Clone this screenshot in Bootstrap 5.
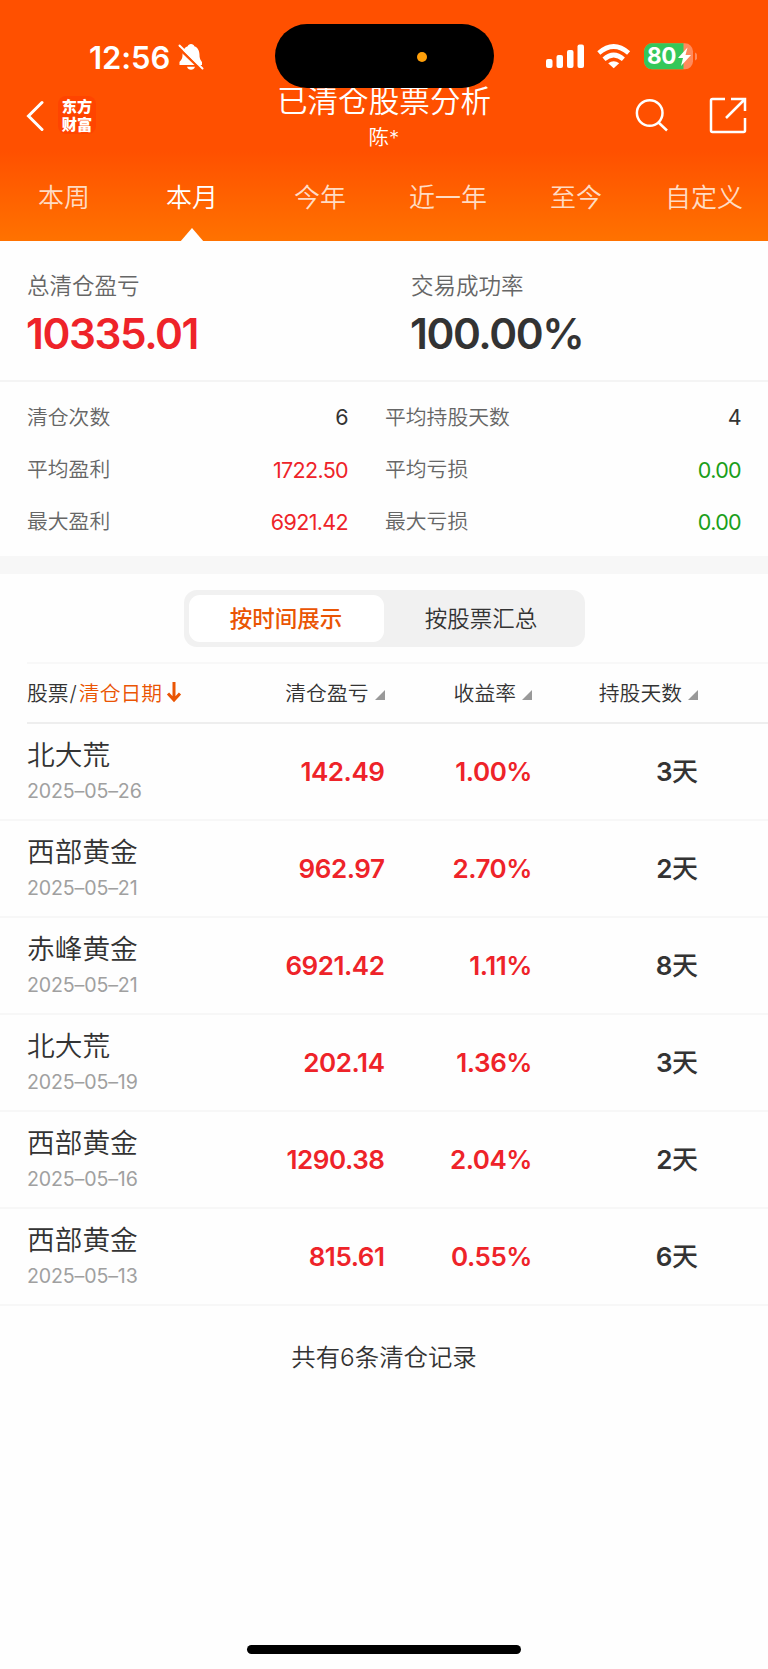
<!DOCTYPE html>
<html lang="zh-CN">
<head>
<meta charset="utf-8">
<meta name="viewport" content="width=device-width, initial-scale=1">
<title>已清仓股票分析</title>
<link href="https://cdn.jsdelivr.net/npm/bootstrap@5.3.0/dist/css/bootstrap.min.css" rel="stylesheet">
<style>
  body { font-family: Inter, "Noto Sans CJK SC", sans-serif; color: #333; background: #fefefe; line-height: 1; font-weight: 350; overflow-x: hidden; }
  .hero { height: 241px; background: linear-gradient(#ff5000 0, #ff5000 150px, #ff7200 241px); }
  .status-row { height: 88px; }
  .clock { font-size: 31px; font-weight: 600; line-height: 36px; margin: 40px 0 0 89px; width: 87px; letter-spacing: -.1px; }
  .island { left: 274.500px; top: 24px; width: 219px; height: 64px; border-radius: 32px; background: #000; z-index: 2; }
  .island i { position: absolute; left: 142px; top: 28px; width: 10px; height: 10px; border-radius: 50%; background: #ff9f0a; }
  .title-row { height: 66px; }
  .app-logo { width: 38px; height: 38px; border-radius: 8px; background: #ff4400; font: 900 15.2px/17.5px "Noto Sans CJK SC", sans-serif; margin: 8px 0 0 14px; padding-top: 1px; }
  .page-title { font-size: 30.6px; line-height: 34px; margin-top: -4px; }
  .page-user { font-size: 20.5px; line-height: 28px; margin-top: 6px; }
  .center-title { left: 0; right: 0; top: 88px; }
  .period { height: 87px; }
  .period a { font-size: 26px; line-height: 88px; color: #ffdcc4; text-decoration: none; }
  .period a.active { color: #fff; }
  .period a.active::after { content: ""; position: absolute; left: 52px; bottom: 0; border: 12px solid transparent; border-top: 0; border-bottom: 14px solid #fefefe; }
  .summary { height: 141px; border-bottom: 2px solid #f4f4f4; padding: 29px 27px 0; }
  .summary .col-6 { padding: 0; }
  .summary .col-6 + .col-6 { padding-left: 27px; }
  .label-lg { font-size: 22.5px; line-height: 32px; color: #666; }
  .figure-lg { font-size: 42.3px; line-height: 52px; font-weight: 560; margin: 6px 0 0 -1px; letter-spacing: -1.4px; }
  .up { color: #ee2329; }
  .down { color: #1a9e1a; }
  .stats { height: 174px; padding: 10px 27px 0; column-gap: 37px; display: grid; grid-template-columns: 321px 356px; grid-auto-rows: 52.3px; font-size: 21.5px; font-weight: 400; letter-spacing: -.65px; }
  .stats span { color: #666; font-size: 20.8px; font-weight: 350; letter-spacing: 0; }
  .band { height: 18px; background: #f7f7f7; }
  .switcher { margin: 16px auto 0; width: 401px; height: 57px; padding: 5px; border-radius: 13px; background: #f1f1f1; }
  .switcher .btn { font-size: 22.5px; line-height: 47px; padding: 0; border: 0; border-radius: 11px; width: 195px; color: #333; font-weight: 350; }
  .switcher .btn.active { background: #fff; color: #ea5504; font-weight: 500; }
  .grid-line { display: grid; grid-template-columns: 200px 157.500px 147.500px 166px; align-items: center; padding-left: 27px; }
  .heads { height: 62px; margin: 15px 0 0 27px; padding: 2px 0 0; border-top: 2px solid #f8f8f8; border-bottom: 2px solid #eee; font-size: 20.8px; }
  .heads .sort-mark { margin-left: 6px; }
  .slash { margin-left: 1px; }
  .sorted { color: #ea5504; margin-left: 2px; }
  .deal { height: 97px; border-bottom: 2px solid #f7f7f7; font-size: 26px; font-weight: 560; letter-spacing: -.45px; }
  .deal .text-end { padding-top: 1px; }
  .deal h2 { font-size: 27.7px; line-height: 36px; margin: -3px 0 0; font-weight: 350; letter-spacing: 0; }
  .deal time { font-size: 19.6px; line-height: 24px; display: block; margin-top: 6px; color: #a0a0a0; font-weight: 400; letter-spacing: -.15px; }
  .deal .unit { font-weight: 500; letter-spacing: 0; }
  .total { font-size: 24.4px; line-height: 36px; margin-top: 33px; }
  .home-bar { width: 274px; height: 9px; border-radius: 5px; background: #000; margin: 270px 0 0 247px; }
</style>
</head>
<body>
<header class="hero position-relative text-white">
  <div class="status-row d-flex">
    <div class="clock">12:56</div>
    <svg width="26" height="28" viewBox="0 0 26 28" style="margin:43px 0 0 2px"><path d="M13 1c1.800 0 3 1 3.300 2.200C20 4.500 21.500 8 21.500 12c0 4 1.500 5.500 2.500 7v3H1.500v-3c1.500-2 3-3 3-7 0-5 2.300-7.800 5.200-8.800C10.300 2 11.300 1 13 1ZM9 23.800h8c-.5 2-2.200 3-4 3s-3.500-1-4-3Z" fill="#fff"/><path d="m0 4.500 24 23" stroke="#ff5000" stroke-width="2.500"/><path d="m1.500 2.500 23 23" stroke="#fff" stroke-width="2" stroke-linecap="round"/></svg>
    <div class="island position-absolute"><i></i></div>
    <svg class="ms-auto" width="154" height="30" viewBox="0 0 154 30" style="margin:42px 71px 0 0">
      <g fill="#fff"><rect x="3" y="17" width="6.500" height="9" rx="2"/><rect x="13.500" y="13" width="6.500" height="13" rx="2"/><rect x="24" y="8" width="6.500" height="18" rx="2"/><rect x="34.500" y="2.500" width="6.500" height="23.500" rx="2"/></g>
      <g fill="none" stroke="#fff" stroke-width="4.600"><path d="M55.800 11q14.900-13 29.800 0"/><path d="M61 17.200q9.700-8.400 19.400 0"/></g>
      <path d="m65.200 21.300 5.500 5 5.500-5q-5.500-4.300-11 0Z" fill="#fff"/>
      <rect x="101" y="1.300" width="49" height="26" rx="8" fill="#ff8a5c"/><path d="M140.500 1.300v26H109a8 8 0 0 1-8-8v-10a8 8 0 0 1 8-8Z" fill="#34c759"/><path d="M152 10.500q2.500 1 2.500 4t-2.500 4Z" fill="#ff8a5c"/>
      <text x="104" y="22.300" font-family="Inter" font-weight="700" font-size="22.500" letter-spacing="-.3" fill="#fff">80</text>
      <path d="m144.500 5.500-9.500 10.500h5l-2 8 10-11h-5.500Z" fill="#fff"/>
    </svg>
  </div>
  <div class="title-row d-flex">
    <svg width="18" height="32" viewBox="0 0 18 32" style="margin:12px 0 0 26px"><path d="M16 2.500 2.500 16 16 29.500" fill="none" stroke="#fff" stroke-width="3" stroke-linecap="round"/></svg>
    <div class="app-logo text-center"><div>东方</div><div>财富</div></div>
    <div class="center-title position-absolute text-center"><div class="page-title">已清仓股票分析</div><div class="page-user">陈*</div></div>
    <svg class="ms-auto" width="34" height="34" viewBox="0 0 34 34" style="margin:10px 40px 0 0"><g fill="none" stroke="#fff" stroke-width="2.500"><circle cx="14.700" cy="15" r="12.800"/><path d="m23.500 24.500 8.500 8"/></g></svg>
    <svg width="38" height="38" viewBox="0 0 38 38" style="margin:9px 21px 0 0"><g fill="none" stroke="#fff" stroke-width="2.500"><path d="M16 2H3.500Q2 2 2 3.500v30Q2 35 3.500 35h31q1.500 0 1.500-1.500V21"/><path d="M22 2h14v12M36 2 17 21"/></g></svg>
  </div>
  <nav class="period row g-0 text-center">
    <a class="col" href="#">本周</a><a class="col active position-relative" href="#">本月</a><a class="col" href="#">今年</a><a class="col" href="#">近一年</a><a class="col" href="#">至今</a><a class="col" href="#">自定义</a>
  </nav>
</header>
<section class="summary">
  <div class="row g-0">
    <div class="col-6"><div class="label-lg">总清仓盈亏</div><div class="figure-lg up">10335.01</div></div>
    <div class="col-6"><div class="label-lg">交易成功率</div><div class="figure-lg">100.00%</div></div>
  </div>
</section>
<section class="stats">
  <div class="d-flex justify-content-between align-items-center"><span>清仓次数</span>6</div>
  <div class="d-flex justify-content-between align-items-center"><span>平均持股天数</span>4</div>
  <div class="d-flex justify-content-between align-items-center up"><span>平均盈利</span>1722.50</div>
  <div class="d-flex justify-content-between align-items-center down"><span>平均亏损</span>0.00</div>
  <div class="d-flex justify-content-between align-items-center up"><span>最大盈利</span>6921.42</div>
  <div class="d-flex justify-content-between align-items-center down"><span>最大亏损</span>0.00</div>
</section>
<div class="band"></div>
<div class="switcher d-flex"><button class="btn active">按时间展示</button><button class="btn">按股票汇总</button></div>
<div class="grid-line heads">
  <div class="d-flex align-items-center">股票<span class="slash">/</span><span class="sorted">清仓日期</span><svg width="16" height="22" viewBox="0 0 16 22" style="margin:-3px 0 0 4px"><path d="M8 1v18M2 12.500l6 6.500 6-6.500" fill="none" stroke="#ea5504" stroke-width="3"/></svg></div>
  <div class="text-end">清仓盈亏<svg class="sort-mark" width="10" height="10"><path d="M10 0v10H0Z" fill="#999"/></svg></div>
  <div class="text-end">收益率<svg class="sort-mark" width="10" height="10"><path d="M10 0v10H0Z" fill="#999"/></svg></div>
  <div class="text-end">持股天数<svg class="sort-mark" width="10" height="10"><path d="M10 0v10H0Z" fill="#999"/></svg></div>
</div>
<main>
  <div class="grid-line deal"><div><h2>北大荒</h2><time>2025–05–26</time></div><div class="text-end up">142.49</div><div class="text-end up">1.00%</div><div class="text-end">3<span class="unit">天</span></div></div>
  <div class="grid-line deal"><div><h2>西部黄金</h2><time>2025–05–21</time></div><div class="text-end up">962.97</div><div class="text-end up">2.70%</div><div class="text-end">2<span class="unit">天</span></div></div>
  <div class="grid-line deal"><div><h2>赤峰黄金</h2><time>2025–05–21</time></div><div class="text-end up">6921.42</div><div class="text-end up">1.11%</div><div class="text-end">8<span class="unit">天</span></div></div>
  <div class="grid-line deal"><div><h2>北大荒</h2><time>2025–05–19</time></div><div class="text-end up">202.14</div><div class="text-end up">1.36%</div><div class="text-end">3<span class="unit">天</span></div></div>
  <div class="grid-line deal"><div><h2>西部黄金</h2><time>2025–05–16</time></div><div class="text-end up">1290.38</div><div class="text-end up">2.04%</div><div class="text-end">2<span class="unit">天</span></div></div>
  <div class="grid-line deal"><div><h2>西部黄金</h2><time>2025–05–13</time></div><div class="text-end up">815.61</div><div class="text-end up">0.55%</div><div class="text-end">6<span class="unit">天</span></div></div>
</main>
<div class="total text-center">共有6条清仓记录</div>
<div class="home-bar"></div>
<script src="https://cdn.jsdelivr.net/npm/bootstrap@5.3.0/dist/js/bootstrap.bundle.min.js"></script>
</body>
</html>
